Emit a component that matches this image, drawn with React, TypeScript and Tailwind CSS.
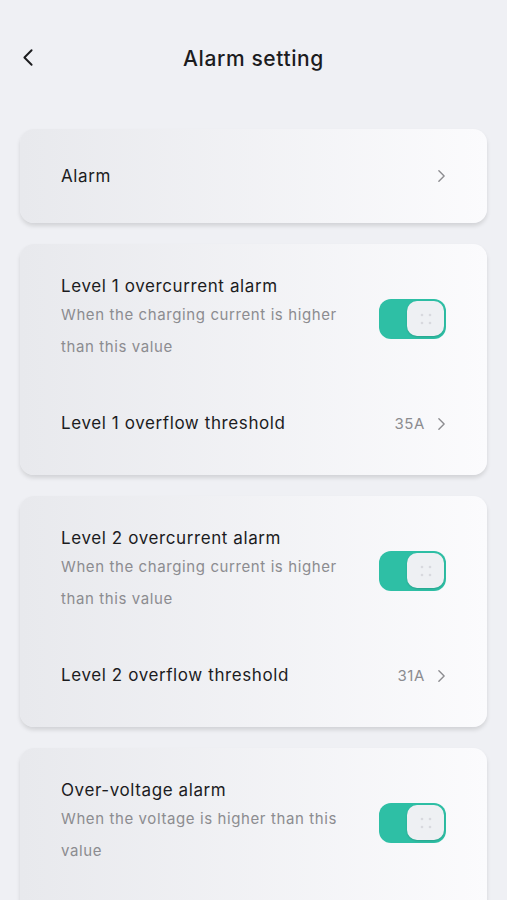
import * as React from "react";

function Chevron({ className }: { className?: string }) {
  return (
    <svg viewBox="0 0 10 16" className={className} fill="none">
      <path d="M2 2l6 6-6 6" stroke="currentColor" strokeWidth="1.6" strokeLinecap="round" strokeLinejoin="round" />
    </svg>
  );
}

function Toggle() {
  return (
    <div className="w-[67px] h-[40px] rounded-[12px] bg-[#2ebfa5] flex items-center justify-end pr-[2px] shrink-0">
      <div className="w-[37px] h-[35px] rounded-[10px] bg-[#eef0f3] flex items-center justify-center shadow-[0_1px_2px_rgba(0,0,0,0.15)]">
        <svg viewBox="0 0 12 12" className="w-[12px] h-[12px]">
          <circle cx="2" cy="2" r="1.3" fill="#d8d9de" />
          <circle cx="10" cy="2" r="1.3" fill="#d8d9de" />
          <circle cx="2" cy="10" r="1.3" fill="#d8d9de" />
          <circle cx="10" cy="10" r="1.3" fill="#d8d9de" />
        </svg>
      </div>
    </div>
  );
}

const card =
  "mx-[20px] rounded-[14px] bg-gradient-to-r from-[#e8e9ed] to-[#fbfbfd] shadow-[0_3px_4px_rgba(0,0,0,0.12)] px-[41px]";

function AlarmCard({ title, desc, threshold, value }: { title: string; desc: string; threshold?: string; value?: string }) {
  return (
    <div className={`${card} pt-[30px] ${threshold ? "pb-[23px]" : "pb-[60px]"}`}>
      <div className="flex items-center justify-between">
        <div className="w-[285px]">
          <div className="text-[17px] leading-[24px] text-[#1c1c1e]">{title}</div>
          <div className="text-[15px] leading-[32px] text-[#8c8c90] mt-[1px]">{desc}</div>
        </div>
        <Toggle />
      </div>
      <div className={threshold ? "mt-[33px] h-[56px] flex items-center justify-between" : "hidden"}>
        <span className="text-[17px] text-[#1c1c1e]">{threshold}</span>
        <span className="flex items-center gap-[12px] text-[15px] text-[#8c8c90]">
          {value}
          <Chevron className="w-[9px] h-[14px] text-[#8c8c90]" />
        </span>
      </div>
    </div>
  );
}

export default function App() {
  return (
    <div className="min-h-[900px] bg-[#eff0f4] font-['Inter','Noto_Sans',sans-serif] tracking-[0.6px] overflow-hidden">
      <div className="relative h-[116px] flex items-start justify-center pt-[45px]">
        <Chevron className="absolute left-[22px] top-[47px] w-[12px] h-[21px] text-[#1c1c1e] rotate-180" />
        <h1 className="text-[21px] leading-[28px] font-medium text-[#1c1c1e]">Alarm setting</h1>
      </div>
      <div className="flex flex-col gap-[21px] mt-[13px]">
        <div className={`${card} h-[94px] flex items-center justify-between`}>
          <span className="text-[17px] text-[#1c1c1e] mt-[2px]">Alarm</span>
          <Chevron className="w-[9px] h-[14px] text-[#8c8c90]" />
        </div>
        <AlarmCard
          title="Level 1 overcurrent alarm"
          desc="When the charging current is higher than this value"
          threshold="Level 1 overflow threshold"
          value="35A"
        />
        <AlarmCard
          title="Level 2 overcurrent alarm"
          desc="When the charging current is higher than this value"
          threshold="Level 2 overflow threshold"
          value="31A"
        />
        <AlarmCard title="Over-voltage alarm" desc="When the voltage is higher than this value" />
      </div>
    </div>
  );
}
